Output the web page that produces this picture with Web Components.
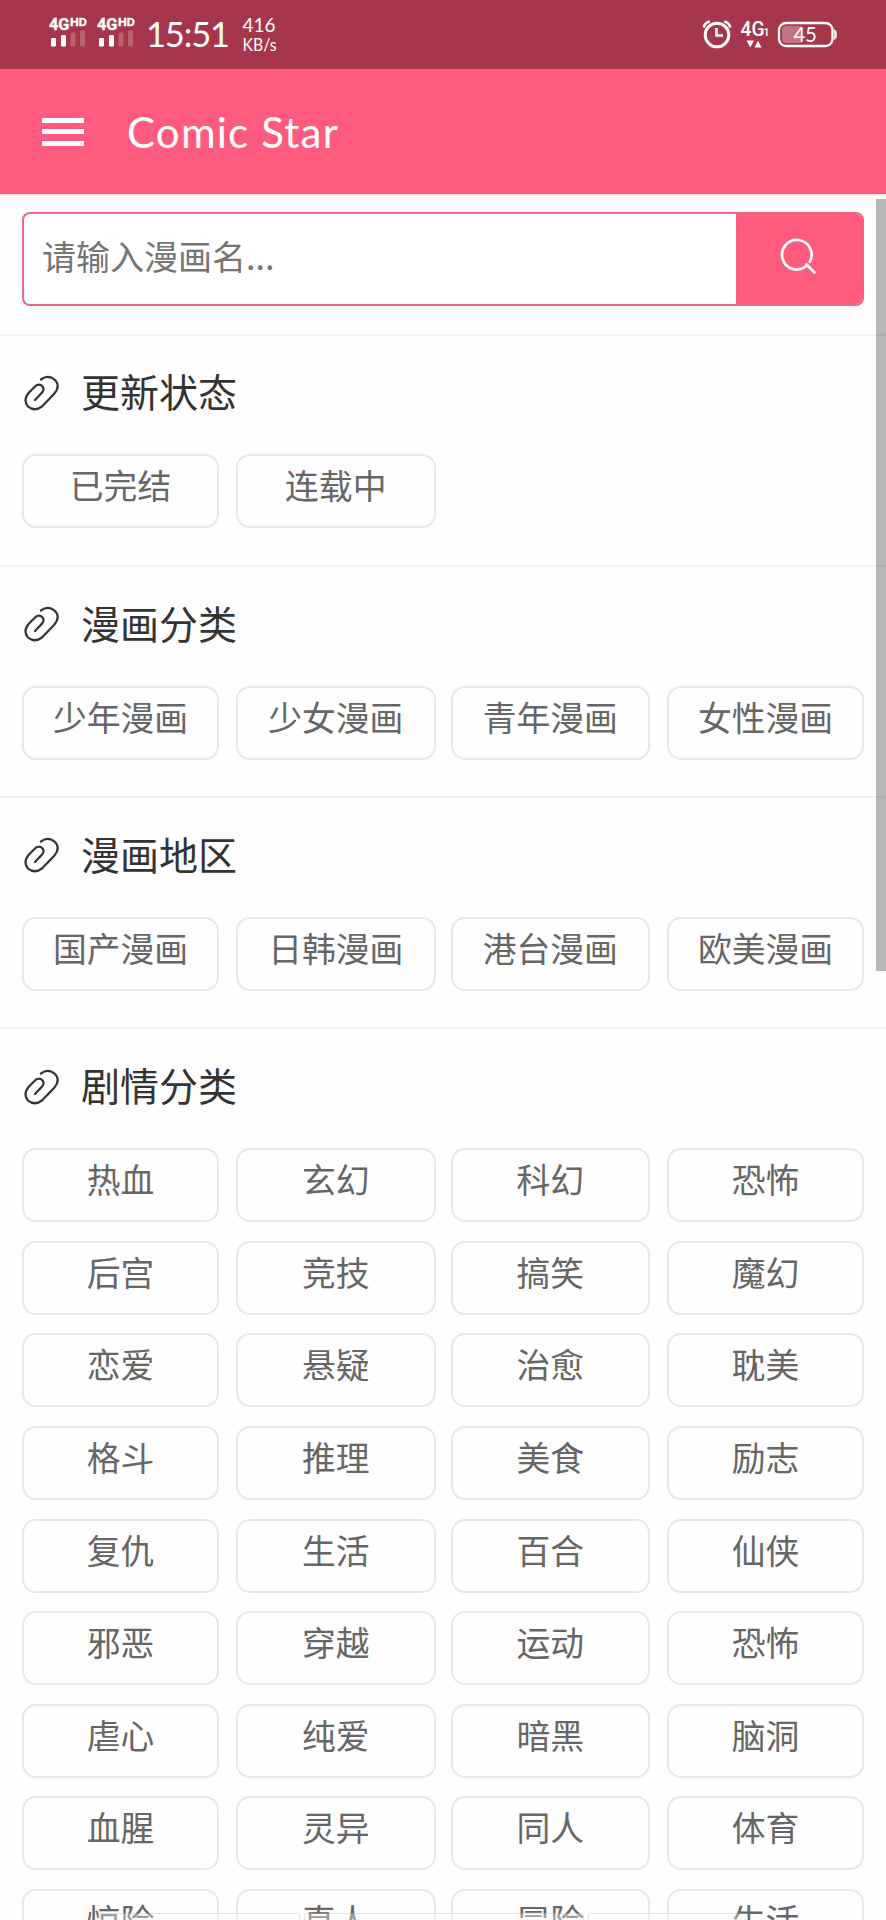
<!DOCTYPE html>
<html lang="zh-CN">
<head>
<meta charset="utf-8">
<title>Comic Star</title>
<style>
html,body{margin:0;padding:0}
body{width:886px;height:1920px;overflow:hidden;background:#fefefe;font-family:"Noto Sans CJK SC","Noto Sans",sans-serif}
</style>
</head>
<body>
<comic-app></comic-app>
<script>
const define = (name, html, init) => {
  const tpl = document.createElement('template');
  tpl.innerHTML = html;
  customElements.define(name, class extends HTMLElement {
    constructor() {
      super();
      this.attachShadow({ mode: 'open' }).appendChild(tpl.content.cloneNode(true));
    }
    connectedCallback() { if (init) init(this, this.shadowRoot); }
  });
};

define('signal-icon', `
<style>
:host{display:block;width:38px;height:30px}
svg{display:block}
text{font-family:Roboto,sans-serif;font-weight:700;fill:#fff;stroke:#fff;stroke-width:.3px}
</style>
<svg width="38" height="30" viewBox="0 0 38 30">
<text x="0" y="13" font-size="16.5" textLength="20.5" lengthAdjust="spacingAndGlyphs">4G</text>
<text x="21" y="8.8" font-size="11.5" textLength="17" lengthAdjust="spacingAndGlyphs">HD</text>
<g fill="#fff"><rect x="2" y="21" width="5" height="8.5" rx="1"/><rect x="12" y="18" width="5" height="11.5" rx="1"/>
<rect x="21.500" y="15.500" width="5" height="14" rx="1" opacity=".22"/><rect x="31" y="13.500" width="5" height="16" rx="1" opacity=".22"/></g>
</svg>`);

define('status-bar', `
<style>
:host{display:flex;height:69px;box-sizing:border-box;background:#a5364b;color:#fff;justify-content:space-between;padding:0 49px;font-family:Lato,sans-serif}
.l,.r{display:flex;align-items:flex-start}
signal-icon{margin:17px 10px 0 0}
svg{display:block}
</style>
<div class="l"><signal-icon></signal-icon><signal-icon></signal-icon>
<svg width="142" height="69" viewBox="0 0 142 69" fill="#fff">
<text x="1" y="46.500" font-size="34.500" font-family="Lato" textLength="84" lengthAdjust="spacing">15:51</text>
<text x="97.500" y="32" font-size="18.500" font-family="Lato" textLength="33" lengthAdjust="spacingAndGlyphs">416</text>
<text x="97.500" y="50.500" font-size="16.500" font-family="Lato" textLength="34" lengthAdjust="spacingAndGlyphs">KB/s</text>
</svg></div>
<div class="r"><svg width="135" height="69" viewBox="702 0 135 69" fill="none" stroke="#fff">
<circle cx="717" cy="35" r="11.800" stroke-width="3"/>
<path d="M716.500 28v7.500h6.500" stroke-width="2.600"/>
<path d="M703.800 27.500q.5-4.500 6-6M730.200 27.500q-.5-4.500-6-6" stroke-width="2.500"/>
<g fill="#fff" stroke="none" font-family="Roboto">
<text x="740.500" y="36" font-size="20" font-weight="500" textLength="24" lengthAdjust="spacingAndGlyphs">4G</text>
<text x="763.500" y="36" font-size="10.500" font-weight="500">1</text>
<path d="M746.500 40.500h7.500l-3.750 7zM754.500 47.500h7l-3.500-7z"/></g>
<rect x="779" y="23" width="53.500" height="23" rx="7" stroke-width="2.300"/>
<path d="M801 26h-15q-4 0-4 4v9q0 4 4 4h15z" fill="#fff" fill-opacity=".32" stroke="none"/>
<path d="M834 29q3 1 3 5.500t-3 5.500z" fill="#fff" fill-opacity=".85" stroke="none"/>
<text x="793.500" y="42" font-size="20.500" font-family="Lato" fill="#fff" stroke="none" textLength="23.500">45</text>
</svg></div>`);

define('app-bar', `
<style>
:host{display:flex;align-items:center;height:125px;box-sizing:border-box;background:#ff5b7f;color:#fff;padding-left:41.500px;box-shadow:0 1px 3px rgba(255,91,127,.25);position:relative}
.m{display:grid;gap:6.500px;width:42px}
.m i{height:5px;background:#fff}
svg{margin-left:43px;display:block}
</style>
<div class="m"><i></i><i></i><i></i></div>
<svg width="220" height="60" viewBox="0 0 220 60"><text x="0" y="45.500" font-family="Lato" font-size="42" fill="#fff" textLength="211" lengthAdjust="spacing">Comic Star</text></svg>`);

define('search-box', `
<style>
:host{display:block;padding:18px 22px 27.500px;border-bottom:2px solid #f2f2f2}
.b{display:flex;height:94px;box-sizing:border-box;border:2px solid #ee6886;border-right-color:#ff5b7f;border-radius:8px;overflow:hidden;background:#fff}
.i{flex:1;padding:0 0 0 18px;font-size:34px;line-height:83px;color:#757575}
.s{flex:none;width:126px;background:#ff5b7f}
.s svg{display:block}
</style>
<div class="b"><div class="i"><slot></slot></div><div class="s">
<svg width="126" height="90" viewBox="736 214 126 90" fill="none" stroke="#fff" stroke-width="2.700" stroke-linecap="round"><path d="M809.800 261.800A14.800 14.800 0 1 0 806 266.300M806.500 264.500L814.500 272.500"/></svg></div></div>`);

define('tag-chip', `
<style>
:host{display:block;height:74px;box-sizing:border-box;border:2px solid #e8e8e8;border-radius:14px;background:#fefefe;text-align:center;font-size:33.800px;line-height:57.500px;color:#666;white-space:nowrap}
</style><slot></slot>`);

define('tag-section', `
<style>
:host{display:block;box-sizing:border-box;border-bottom:2px solid #f2f2f2;padding:0 22px 36.500px}
.h{display:flex;align-items:center;height:118.800px;color:#333;font-size:39px;box-sizing:border-box;padding-bottom:4px}
.h svg{flex:none;margin:0 21px 0 2px}
.t{line-height:50px;margin-top:-5px}
.g{display:grid;grid-template-columns:199px 199.500px 201.500px 197px;column-gap:15px;row-gap:18.600px}
.g tag-chip:nth-child(odd){margin-right:2px}
</style>
<div class="h"><svg width="36" height="36" viewBox="0 0 36 36" fill="none" stroke="#333" stroke-width="2.200" stroke-linecap="round"><path d="M11 25L18.500 17Q20.500 14 18.500 11.500Q15.500 8 11.500 11L5 17.500Q-1.500 25 4 31.500Q10.500 37 18 31.500L30 19Q36.500 11.500 31.500 5.500Q24.500-1 17 4.500"/></svg><div class="t"></div></div>
<div class="g"></div>`, (el, root) => {
  root.querySelector('.t').textContent = el.getAttribute('heading');
  root.querySelector('.g').innerHTML = el.getAttribute('tags').split(' ').map(t => '<tag-chip>' + t + '</tag-chip>').join('');
});

define('gesture-hints', `
<style>
:host{display:flex;position:absolute;left:98px;bottom:0;height:7px;gap:4px}
i{box-sizing:border-box;background:rgba(255,255,255,.35);border:1px solid rgba(0,0,0,.1);border-bottom:0;border-radius:2px 2px 0 0}
i:nth-of-type(1){width:202px;border-left:0}
i:nth-of-type(2){width:280px}
i:nth-of-type(3){width:160px;border-right:0}
</style><i></i><i></i><i></i>`);

define('comic-app', `
<style>
:host{display:block;position:relative;width:886px;height:1920px;overflow:hidden;background:#fefefe}
.bar{position:absolute;right:0;top:199px;width:10px;height:772px;background:rgba(0,0,0,.28)}
</style>
<status-bar></status-bar>
<app-bar></app-bar>
<search-box>请输入漫画名...</search-box>
<tag-section heading="更新状态" tags="已完结 连载中"></tag-section>
<tag-section heading="漫画分类" tags="少年漫画 少女漫画 青年漫画 女性漫画"></tag-section>
<tag-section heading="漫画地区" tags="国产漫画 日韩漫画 港台漫画 欧美漫画"></tag-section>
<tag-section heading="剧情分类" tags="热血 玄幻 科幻 恐怖 后宫 竞技 搞笑 魔幻 恋爱 悬疑 治愈 耽美 格斗 推理 美食 励志 复仇 生活 百合 仙侠 邪恶 穿越 运动 恐怖 虐心 纯爱 暗黑 脑洞 血腥 灵异 同人 体育 惊险 真人 冒险 生活"></tag-section>
<gesture-hints></gesture-hints>
<div class="bar"></div>`);
</script>
</body>
</html>
